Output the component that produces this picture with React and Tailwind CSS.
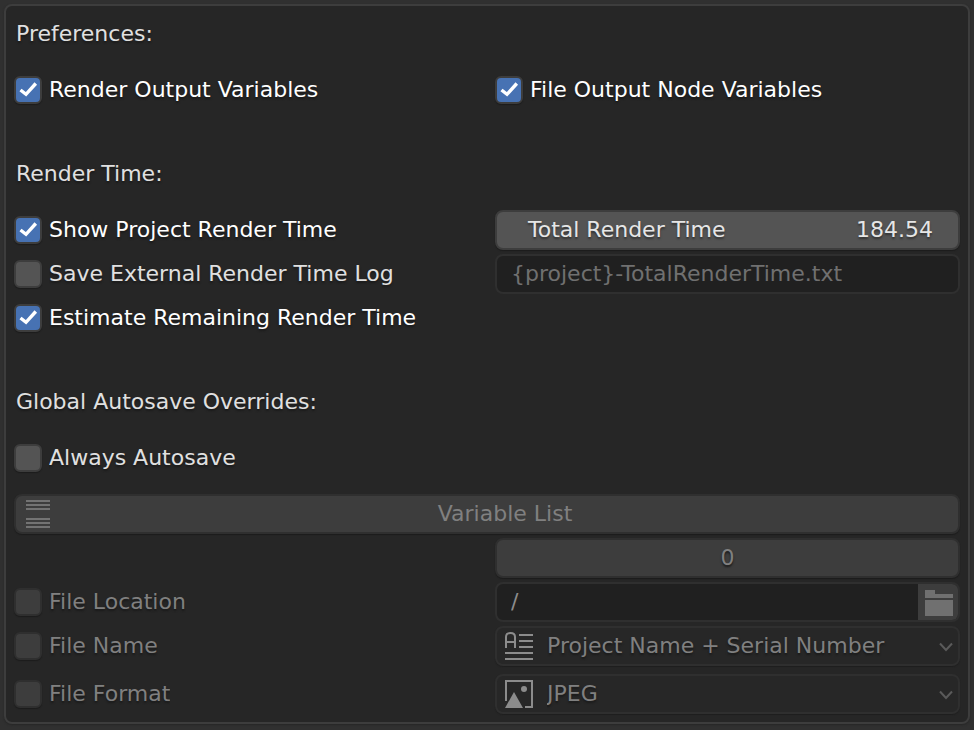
import React from "react";

function Heading({ children, className = "" }) {
  return (
    <h2 className={`h-10 pl-0.5 leading-10 text-[#e0e0e0] ${className}`}>{children}</h2>
  );
}

function Check({ label, checked = false, disabled = false, className = "" }) {
  const tone = disabled ? "text-[#808080]" : checked ? "text-white" : "text-[#e0e0e0]";
  const box = disabled
    ? "border-[#2f2f2f] bg-[#3d3d3d]"
    : "border-[#3d3d3d] bg-[#545454] checked:bg-[#4772b3]";
  return (
    <label className={`flex h-10 min-w-0 items-center gap-[7px] ${tone} ${className}`}>
      <span className="relative size-7 shrink-0">
        <input
          type="checkbox"
          defaultChecked={checked}
          disabled={disabled}
          className={`peer block size-7 appearance-none rounded-md border-2 shadow-[0_1px_1px_#1c1c1c] ${box}`}
        />
        <svg
          viewBox="0 0 28 28"
          className="pointer-events-none absolute inset-0 hidden size-7 peer-checked:block"
          fill="none"
          stroke="#fff"
          strokeWidth="3.4"
        >
          <path d="M6.500 14 12 18.300 21.800 7.500" />
        </svg>
      </span>
      <span className="truncate leading-[38px]">{label}</span>
    </label>
  );
}

function Dropdown({ label, value, icon }) {
  return (
    <div className="relative h-10">
      <select
        disabled
        aria-label={label}
        defaultValue={value}
        className="block h-10 w-full appearance-none rounded-lg border-2 border-[#2f2f2f] bg-[#272727] pb-0.5 pl-[50px] pr-8 text-[#808080] opacity-100 shadow-[0_1px_1px_#1f1f1f] text-shadow-[0_2px_2px_#1a1a1a]"
      >
        <option>{value}</option>
      </select>
      <svg
        viewBox="0 0 30 30"
        className="pointer-events-none absolute left-[9px] top-[5px] size-[30px]"
        fill="none"
        stroke="#8c8c8c"
        strokeWidth="2"
      >
        {icon}
      </svg>
      <svg
        viewBox="0 0 14 10"
        className="pointer-events-none absolute right-[7px] top-4 h-2.5 w-3.5"
        fill="none"
        stroke="#5a5a5a"
        strokeWidth="2"
      >
        <path d="M1 1.5 7 8 13 1.5" />
      </svg>
    </div>
  );
}

const textIcon = (
  <path d="M2 17V6Q2 2 6.500 2T11 6V17M2 11H11M15 4H29M15 10H29M15 16H29M1 22H29M1 28H29" />
);

const imageIcon = (
  <>
    <path d="M2 22V2H28V28H21" />
    <circle cx="20" cy="10" r="3" fill="#8c8c8c" stroke="none" />
    <path d="M10 13 19 29H1Z" fill="#8c8c8c" stroke="none" />
  </>
);

export default function App() {
  return (
    <main className="min-h-screen bg-[#303030] p-1 font-['DejaVu_Sans',sans-serif] text-[22px]">
      <section className="rounded-lg border-2 border-[#3d3d3d] bg-[#262626] p-2 shadow-[0_1px_2px_#262626] text-shadow-[0_2px_2px_#1a1a1a]">
        <Heading>Preferences:</Heading>
        <div className="mt-4 grid grid-cols-2 gap-x-4">
          <Check label="Render Output Variables" checked />
          <Check label="File Output Node Variables" checked />
        </div>

        <Heading className="mt-11">Render Time:</Heading>
        <div className="mt-4 grid grid-cols-2 gap-x-4 gap-y-1">
          <Check label="Show Project Render Time" checked />
          <label className="flex h-10 items-center rounded-lg border-2 border-[#3d3d3d] bg-[#545454] pl-[31px] pr-[25px] text-[#e6e6e6] shadow-[0_1px_1px_#1c1c1c] text-shadow-[0_2px_2px_#333333]">
            <span className="shrink-0 leading-9">Total Render Time</span>
            <input
              type="text"
              inputMode="decimal"
              defaultValue="184.54"
              className="h-9 min-w-0 flex-1 bg-transparent pb-0.5 text-right outline-none text-shadow-[0_2px_2px_#333333]"
            />
          </label>
          <Check label="Save External Render Time Log" />
          <input
            type="text"
            disabled
            aria-label="Render time log file"
            defaultValue="{project}-TotalRenderTime.txt"
            className="h-10 w-full min-w-0 rounded-lg border-2 border-[#2f2f2f] bg-[#202020] px-3.5 pb-0.5 text-[#707070]"
          />
          <Check label="Estimate Remaining Render Time" checked />
        </div>

        <Heading className="mt-11">Global Autosave Overrides:</Heading>
        <Check label="Always Autosave" className="mt-4" />
        <button
          type="button"
          disabled
          className="relative mt-4 block h-10 w-full rounded-lg border-2 border-[#2f2f2f] bg-[#3d3d3d] pb-0.5 pl-9 text-[#808080] shadow-[0_1px_1px_#1c1c1c]"
        >
          <svg
            viewBox="0 0 24 28"
            className="absolute left-2.5 top-1 h-7 w-6"
            stroke="#737373"
            strokeWidth="2"
          >
            <path d="M0 1H24M0 5H24M0 9H24M0 19H24M0 23H24M0 27H24" />
          </svg>
          Variable List
        </button>
        <div className="mt-1 grid grid-cols-2 gap-x-4 gap-y-1">
          <input
            type="text"
            disabled
            aria-label="Serial number"
            defaultValue="0"
            className="col-start-2 h-10 w-full min-w-0 rounded-lg border-2 border-[#2f2f2f] bg-[#3d3d3d] pb-0.5 text-center text-[#808080] shadow-[0_1px_1px_#1c1c1c] text-shadow-[0_2px_2px_#1a1a1a]"
          />
          <Check label="File Location" disabled />
          <div className="flex h-10 overflow-hidden rounded-lg border-2 border-[#2f2f2f] bg-[#202020]">
            <input
              type="text"
              disabled
              aria-label="File location path"
              defaultValue="/"
              className="min-w-0 flex-1 px-3.5 pb-0.5 text-[#8c8c8c]"
            />
            <button
              type="button"
              disabled
              aria-label="Browse folders"
              className="flex w-10 items-end justify-end bg-[#3d3d3d] pb-1 pr-[5px]"
            >
              <svg viewBox="0 0 28 26" className="h-[26px] w-7" fill="#707070">
                <path d="M0 0H10V4H28V8H0ZM0 10H28V26H0Z" />
              </svg>
            </button>
          </div>
          <Check label="File Name" disabled />
          <Dropdown label="File Name" value="Project Name + Serial Number" icon={textIcon} />
        </div>
        <div className="mt-2 grid grid-cols-2 gap-x-4">
          <Check label="File Format" disabled />
          <Dropdown label="File Format" value="JPEG" icon={imageIcon} />
        </div>
      </section>
    </main>
  );
}
